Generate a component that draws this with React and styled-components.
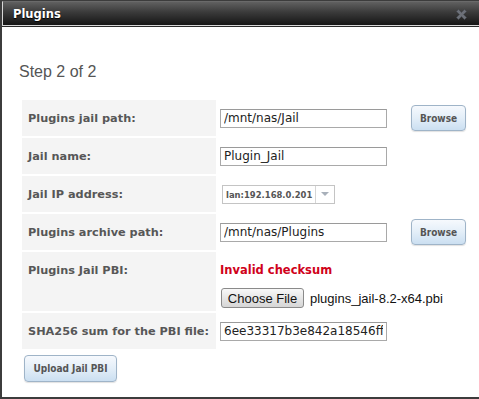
import React from "react";
import styled, { createGlobalStyle } from "styled-components";

const Global = createGlobalStyle`
  html, body { margin: 0; padding: 0; background: #fff; overflow: hidden; }
  body { width: 479px; height: 399px; }
`;

const Window = styled.div`
  box-sizing: border-box;
  width: 492px;
  height: 399px;
  border: 2px solid #3c3c3c;
  border-top-width: 1px;
  background: #fff;
  display: flex;
  flex-direction: column;
`;

const TitleBar = styled.div`
  box-sizing: border-box;
  height: 25px;
  border: 1px solid #d8d8d8;
  border-top-color: #6a6a6a;
  background: linear-gradient(#606060, #3a3a3a 45%, #151515);
  display: flex;
  align-items: center;
  justify-content: space-between;
  padding: 0 21px 0 10px;
  box-shadow: 0 1px 0 #2a2a2a;
`;

const Title = styled.span`
  font-family: "DejaVu Sans", Verdana, sans-serif;
  font-weight: bold;
  font-size: 11.5px;
  color: #fff;
  text-shadow: 0 1px 1px #000;
  margin-top: 1px;
`;

const Close = styled.svg`
  width: 13px;
  height: 13px;
  margin-top: 2px;
`;

const Body = styled.div`
  padding: 37px 0 0 17px;
  display: flex;
  flex-direction: column;
`;

const Step = styled.div`
  font-family: "Liberation Sans", Arial, sans-serif;
  font-size: 16px;
  color: #555;
  line-height: 18px;
  margin-bottom: 19px;
`;

const Form = styled.div`
  display: grid;
  grid-template-columns: 194px 260px;
  row-gap: 2px;
  column-gap: 2px;
  margin-left: 3px;
`;

const Label = styled.div`
  background: #f4f4f4;
  font-family: "DejaVu Sans", Verdana, sans-serif;
  font-weight: bold;
  font-size: 11.3px;
  color: #575757;
  padding: ${(p) => (p.$top ? "12px 6px 0" : "0 6px")};
  display: flex;
  align-items: ${(p) => (p.$top ? "flex-start" : "center")};
  min-height: ${(p) => p.$h || 36}px;
  box-sizing: border-box;
`;

const Value = styled.div`
  display: flex;
  align-items: center;
  padding-left: 2px;
  min-height: ${(p) => p.$h || 36}px;
  box-sizing: border-box;
`;

const Stack = styled.div`
  display: flex;
  flex-direction: column;
  padding: 12px 0 0 2px;
  gap: 11px;
  box-sizing: border-box;
  min-height: ${(p) => p.$h || 36}px;
`;

const TextInput = styled.input`
  box-sizing: border-box;
  width: 167px;
  height: 19px;
  border: 1px solid #a9a9a9;
  border-top-color: #9a9a9a;
  padding: 0 3px;
  font-family: "DejaVu Sans", Verdana, sans-serif;
  font-size: 12px;
  color: #222;
  background: #fff;
  outline: none;
`;

const BlueButton = styled.button`
  box-sizing: border-box;
  width: ${(p) => p.$w}px;
  height: ${(p) => p.$h}px;
  margin-left: ${(p) => p.$ml || 0}px;
  border: 1px solid #9fb4c8;
  border-radius: 4px;
  background: linear-gradient(#f6f9fd, #e3eef8 50%, #cbdff1);
  box-shadow: 0 1px 1px rgba(0, 0, 0, 0.12);
  font-family: "DejaVu Sans Condensed", "DejaVu Sans", Verdana, sans-serif;
  font-weight: bold;
  font-size: 10px;
  color: #555;
  padding: 0;
  cursor: pointer;
`;

const Select = styled.div`
  box-sizing: border-box;
  width: 113px;
  height: 19px;
  margin-left: 2px;
  border: 1px solid #c4c4c4;
  display: flex;
  align-items: stretch;
  background: #fff;
`;

const SelectText = styled.span`
  flex: 1;
  font-family: "DejaVu Sans Condensed", "DejaVu Sans", Verdana, sans-serif;
  font-weight: bold;
  font-size: 9.4px;
  color: #555;
  padding: 0 0 0 3px;
  display: flex;
  align-items: center;
  white-space: nowrap;
`;

const SelectArrow = styled.span`
  width: 18px;
  border-left: 1px solid #d6d6d6;
  display: flex;
  align-items: center;
  justify-content: center;
`;

const Error = styled.div`
  font-family: "DejaVu Sans", Verdana, sans-serif;
  font-weight: bold;
  font-size: 11.5px;
  color: #d0021b;
  line-height: 13px;
`;

const FileRow = styled.div`
  display: flex;
  align-items: center;
  gap: 6px;
  margin-left: 1px;
`;

const FileButton = styled.button`
  box-sizing: border-box;
  height: 20px;
  width: 83px;
  padding: 0;
  border: 1px solid #8a8a8a;
  border-radius: 3px;
  background: linear-gradient(#f8f8f8, #e6e6e6 50%, #d6d6d6);
  font-family: "Liberation Sans", Arial, sans-serif;
  font-size: 13px;
  color: #111;
`;

const FileName = styled.span`
  font-family: "Liberation Sans", Arial, sans-serif;
  font-size: 13px;
  color: #111;
`;

const Footer = styled.div`
  display: flex;
  padding: 6px 0 0 5px;
`;

export default function App() {
  return (
    <>
      <Global />
      <Window>
        <TitleBar>
          <Title>Plugins</Title>
          <Close viewBox="0 0 13 13">
            <path
              d="M1.5 3.5 L3.5 1.5 L6.5 4.5 L9.5 1.5 L11.5 3.5 L8.5 6.5 L11.5 9.5 L9.5 11.5 L6.5 8.5 L3.5 11.5 L1.5 9.5 L4.5 6.5 Z"
              fill="#6c7078"
              stroke="#4c5058"
              strokeWidth="0.7"
            />
          </Close>
        </TitleBar>
        <Body>
          <Step>Step 2 of 2</Step>
          <Form>
            <Label>Plugins jail path:</Label>
            <Value>
              <TextInput defaultValue="/mnt/nas/Jail" />
              <BlueButton $w={55} $h={26} $ml={24}>Browse</BlueButton>
            </Value>

            <Label>Jail name:</Label>
            <Value>
              <TextInput defaultValue="Plugin_Jail" />
            </Value>

            <Label>Jail IP address:</Label>
            <Value>
              <Select>
                <SelectText>lan:192.168.0.201</SelectText>
                <SelectArrow>
                  <svg width="8" height="5" viewBox="0 0 8 5">
                    <path d="M0 0 H8 L4 4 Z" fill="#a8b0ba" />
                  </svg>
                </SelectArrow>
              </Select>
            </Value>

            <Label>Plugins archive path:</Label>
            <Value>
              <TextInput defaultValue="/mnt/nas/Plugins" />
              <BlueButton $w={55} $h={26} $ml={24}>Browse</BlueButton>
            </Value>

            <Label $top $h={59}>Plugins Jail PBI:</Label>
            <Stack $h={59}>
              <Error>Invalid checksum</Error>
              <FileRow>
                <FileButton>Choose File</FileButton>
                <FileName>plugins_jail-8.2-x64.pbi</FileName>
              </FileRow>
            </Stack>

            <Label>SHA256 sum for the PBI file:</Label>
            <Value>
              <TextInput defaultValue="6ee33317b3e842a18546ff92c4d7a10e5b3f9e28d1c6a74b0f2e83d915c7a6b4" />
            </Value>
          </Form>
          <Footer>
            <BlueButton $w={93} $h={27}>Upload Jail PBI</BlueButton>
          </Footer>
        </Body>
      </Window>
    </>
  );
}
